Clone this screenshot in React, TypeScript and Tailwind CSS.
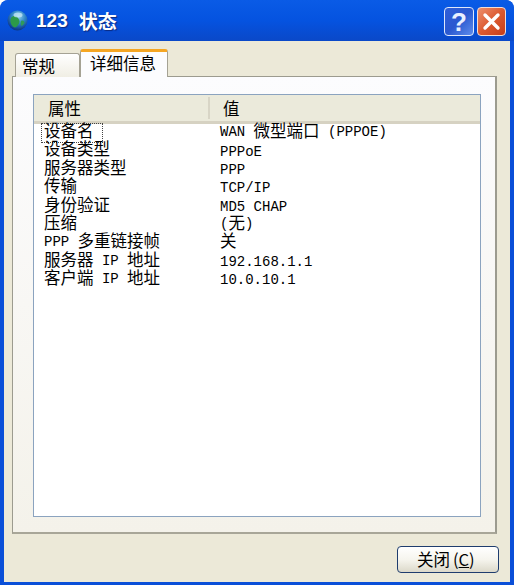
import React from "react"

const rows = [
  ["设备名", "WAN 微型端口 (PPPOE)"],
  ["设备类型", "PPPoE"],
  ["服务器类型", "PPP"],
  ["传输", "TCP/IP"],
  ["身份验证", "MD5 CHAP"],
  ["压缩", "(无)"],
  ["PPP 多重链接帧", "关"],
  ["服务器 IP 地址", "192.168.1.1"],
  ["客户端 IP 地址", "10.0.10.1"],
]

function Cell({ text }: { text: string }) {
  const parts = text.split(/([\u4e00-\u9fff]+)/).filter(Boolean)
  return (
    <span className="whitespace-pre">
      {parts.map((p, i) =>
        /[\u4e00-\u9fff]/.test(p) ? (
          <span key={i} className="text-[16.5px] align-[-1px]">
            {p}
          </span>
        ) : (
          <span key={i}>{p}</span>
        )
      )}
    </span>
  )
}

function Globe() {
  return (
    <svg width="21" height="21" viewBox="0 0 21 21">
      <defs>
        <radialGradient id="sea" cx="0.55" cy="0.3" r="0.75">
          <stop offset="0" stopColor="#8fd0ee" />
          <stop offset="0.45" stopColor="#2f86c8" />
          <stop offset="0.85" stopColor="#0f3f90" />
          <stop offset="1" stopColor="#0b2f78" />
        </radialGradient>
      </defs>
      <circle cx="10.5" cy="10.5" r="10" fill="url(#sea)" />
      <path d="M4 8 C6 5 10 6 11 8 C13 10 13 13 11 15 C10 17 8 18 6.5 17 C4 15 2.5 11 4 8Z" fill="#2c9a48" />
      <path d="M14 11 C16 10 17.5 11 17.5 13 C16.5 15 15 16 14 15.5 C13.5 14 13.5 12.5 14 11Z" fill="#2f9a5a" />
      <ellipse cx="11" cy="5" rx="4.5" ry="2.5" fill="#c4e8f6" opacity="0.75" />
    </svg>
  )
}

function HelpButton() {
  return (
    <div className="w-[30px] h-[29px] rounded-[4px] border border-[#dfe8fb] bg-gradient-to-br from-[#2f5fd8] via-[#2a58d0] to-[#5f8cec] flex items-center justify-center text-[#e8f0ff] text-[26px] leading-none font-bold font-['Liberation_Sans',sans-serif]">
      ?
    </div>
  )
}

function CloseButton() {
  return (
    <div className="w-[29px] h-[29px] rounded-[4px] border border-[#f4ddd4] bg-gradient-to-br from-[#ec8e6c] via-[#dc5a30] to-[#c63c18] flex items-center justify-center">
      <svg width="19" height="19" viewBox="0 0 19 19">
        <path d="M3 3 L16 16 M16 3 L3 16" stroke="#fff" strokeWidth="3.4" strokeLinecap="round" />
      </svg>
    </div>
  )
}

export default function App() {
  return (
    <div className="w-[514px] h-[585px] flex flex-col overflow-hidden bg-[#0a4fd8] rounded-t-[8px] font-['Liberation_Mono','Noto_Sans_CJK_SC',monospace]">
      {/* Title bar */}
      <div className="h-[41px] shrink-0 flex items-center pl-[7px] pr-[8px] rounded-t-[8px] bg-gradient-to-b from-[#0a5be6] via-[#0553e0] to-[#0a48c8] text-white">
        <Globe />
        <div className="ml-[8px] flex items-center gap-[11px] font-bold text-[19px] leading-none [text-shadow:1px_1px_1px_#0a2a80]">
          <span className="font-['Liberation_Sans',sans-serif]">123</span>
          <span className="font-['Noto_Sans_CJK_SC',sans-serif]">状态</span>
        </div>
        <div className="ml-auto flex gap-[3px] mt-[2px]">
          <HelpButton />
          <CloseButton />
        </div>
      </div>

      {/* Dialog body */}
      <div className="flex-1 mx-[4px] mb-[3px] bg-[#ece9d8] px-[8px] pt-[8px] flex flex-col min-h-0">
        {/* Tabs */}
        <div className="h-[27px] flex items-end pl-[3px] relative z-10 shrink-0 text-black text-[16.5px] font-['Noto_Sans_CJK_SC',sans-serif]">
          <div className="w-[65px] h-[24px] border border-b-0 border-[#a5a294] rounded-t-[3px] bg-gradient-to-b from-white to-[#f0eee4] flex items-center pl-[6px] leading-none mb-[-1px] pt-[1px]">
            常规
          </div>
          <div className="w-[88px] h-[28px] border-x border-[#a5a294] border-t-[3px] border-t-[#f5a623] rounded-t-[3px] bg-[#fcfcfe] flex items-center pl-[9px] pb-[3px] leading-none mb-[-1px]">
            详细信息
          </div>
        </div>

        {/* Panel */}
        <div className="w-[485px] h-[458px] shrink-0 border border-[#9c9b8f] border-r-[2px] border-b-[2px] border-b-[#a8a698] bg-gradient-to-b from-[#fcfcfe] to-[#f4f2ea] pl-[20px] pr-[16px] pt-[17px] pb-[15px]">
          <div className="w-[448px] h-full border border-[#8ba3bf] bg-white flex flex-col overflow-hidden">
            <div className="h-[29px] shrink-0 flex items-center bg-[#ebeadb] border-b-[3px] border-b-[#d6d2c2] text-[16.5px] text-black font-['Noto_Sans_CJK_SC',sans-serif]">
              <div className="w-[176px] pl-[14px] leading-none border-r-2 border-r-[#d8d5c6] h-[22px] flex items-center">属性</div>
              <div className="pl-[13px] leading-none">值</div>
            </div>
            <div className="text-[14px] text-black">
              {rows.map(([name, value], i) => (
                <div key={name} className="h-[18.4px] flex items-center leading-none">
                  <div className="w-[178px] pl-[8px] flex items-center">
                    {i === 0 ? (
                      <div className="h-[18px] w-[60px] outline-1 outline-dotted outline-[#444] flex items-center pl-[2px]">
                        <Cell text={name} />
                      </div>
                    ) : (
                      <span className="pl-[2px]">
                        <Cell text={name} />
                      </span>
                    )}
                  </div>
                  <div className="pl-[8px]">
                    <Cell text={value} />
                  </div>
                </div>
              ))}
            </div>
          </div>
        </div>

        {/* Footer */}
        <div className="flex-1 flex justify-end items-start pt-[12px] pr-[3px]">
          <div className="w-[102px] h-[27px] rounded-[4px] border border-[#1f3d6e] bg-gradient-to-b from-white via-[#f6f5ee] to-[#dcd9ca] flex items-center pl-[19px] text-[16.5px] leading-none text-black font-['Noto_Sans_CJK_SC',sans-serif]">
            关闭 <span className="ml-[3px]">(<span className="underline">C</span>)</span>
          </div>
        </div>
      </div>
    </div>
  )
}
